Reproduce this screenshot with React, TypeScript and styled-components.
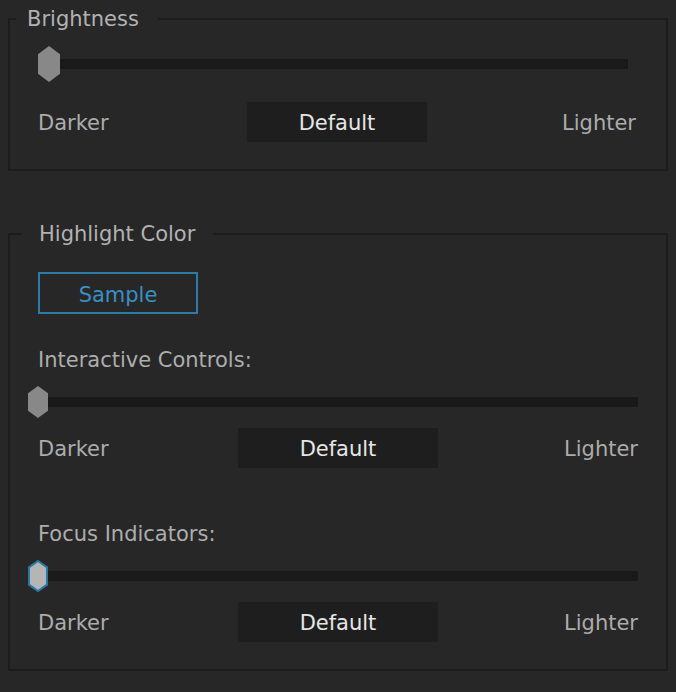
import React from "react";
import styled, { createGlobalStyle } from "styled-components";

const GlobalStyle = createGlobalStyle`
  html, body {
    margin: 0;
    padding: 0;
    background: #272727;
  }
  body {
    font-family: "DejaVu Sans", "Open Sans", sans-serif;
  }
`;

const Page = styled.div`
  width: 676px;
  height: 692px;
  box-sizing: border-box;
  padding-top: 5px;
  background: #272727;
  font-family: "DejaVu Sans", "Open Sans", sans-serif;
  font-size: 21px;
  line-height: 28px;
  color: #acacac;
  overflow: hidden;
`;

const Group = styled.fieldset<{ $gap?: number }>`
  margin: ${(p) => p.$gap ?? 0}px 8px 0 8px;
  padding: 0;
  min-width: 0;
  border: 2px solid #1c1c1c;
`;

const Legend = styled.legend<{ $ml: number; $pl: number; $pr: number }>`
  margin-left: ${(p) => p.$ml}px;
  padding: 0 ${(p) => p.$pr}px 0 ${(p) => p.$pl}px;
  font-size: 21px;
  line-height: 28px;
  color: #b2b2b2;
`;

const Body = styled.div<{ $pl: number; $pr: number }>`
  display: flex;
  flex-direction: column;
  padding: 0 ${(p) => p.$pr}px 27px ${(p) => p.$pl}px;
`;

const Label = styled.div<{ $mt: number }>`
  margin-top: ${(p) => p.$mt}px;
  height: 28px;
  line-height: 28px;
  color: #adadad;
  white-space: nowrap;
`;

const SampleButton = styled.button`
  margin-top: 24px;
  width: 160px;
  height: 42px;
  box-sizing: border-box;
  border: 2px solid #2b7aa7;
  background: transparent;
  color: #3a8fc3;
  font-family: inherit;
  font-size: 21px;
  line-height: 26px;
  padding: 3px 0 0 0;
  cursor: pointer;
`;

const SliderRow = styled.div<{ $mt: number; $h: number; $ml?: number; $mr?: number }>`
  display: flex;
  align-items: center;
  height: ${(p) => p.$h}px;
  margin-top: ${(p) => p.$mt}px;
  margin-left: ${(p) => p.$ml ?? 0}px;
  margin-right: ${(p) => p.$mr ?? 0}px;
`;

const Track = styled.div`
  flex: 1;
  height: 10px;
  background: #191919;
`;

const ThumbSvg = styled.svg`
  flex-shrink: 0;
  display: block;
`;

const ScaleRow = styled.div<{ $mt: number }>`
  display: grid;
  grid-template-columns: 1fr auto 1fr;
  align-items: center;
  margin-top: ${(p) => p.$mt}px;
`;

const ScaleText = styled.span<{ $right?: boolean }>`
  color: #acacac;
  justify-self: ${(p) => (p.$right ? "end" : "start")};
  white-space: nowrap;
  padding-top: 1px;
`;

const DefaultButton = styled.button<{ $w: number }>`
  width: ${(p) => p.$w}px;
  height: 40px;
  border: none;
  padding: 2px 0 0 0;
  background: #1e1e1e;
  color: #e6e6e6;
  font-family: inherit;
  font-size: 21px;
  line-height: 26px;
  cursor: pointer;
`;

type ThumbProps = { w: number; h: number; focused?: boolean };

const Thumb: React.FC<ThumbProps> = ({ w, h, focused }) => {
  const s = focused ? 1 : 0;
  const k = h * 0.23;
  const pts = [
    [w / 2, s],
    [w - s, k],
    [w - s, h - k],
    [w / 2, h - s],
    [s, h - k],
    [s, k],
  ]
    .map((p) => p.join(","))
    .join(" ");
  return (
    <ThumbSvg width={w} height={h} viewBox={`0 0 ${w} ${h}`}>
      <polygon
        points={pts}
        fill={focused ? "#b5b5b5" : "#888888"}
        stroke={focused ? "#2b78a7" : "none"}
        strokeWidth={focused ? 2 : 0}
      />
    </ThumbSvg>
  );
};

type SliderProps = {
  mt: number;
  h: number;
  tw: number;
  ml?: number;
  mr?: number;
  focused?: boolean;
};

const Slider: React.FC<SliderProps> = ({ mt, h, tw, ml, mr, focused }) => (
  <SliderRow $mt={mt} $h={h} $ml={ml} $mr={mr}>
    <Thumb w={tw} h={h} focused={focused} />
    <Track />
  </SliderRow>
);

const Scale: React.FC<{ mt: number; bw: number }> = ({ mt, bw }) => (
  <ScaleRow $mt={mt}>
    <ScaleText>Darker</ScaleText>
    <DefaultButton $w={bw}>Default</DefaultButton>
    <ScaleText $right>Lighter</ScaleText>
  </ScaleRow>
);

export default function App() {
  return (
    <>
      <GlobalStyle />
      <Page>
        <Group>
          <Legend $ml={6} $pl={11} $pr={19}>
            Brightness
          </Legend>
          <Body $pl={28} $pr={30}>
            <Slider mt={13} h={36} tw={22} mr={8} />
            <Scale mt={20} bw={180} />
          </Body>
        </Group>

        <Group $gap={49}>
          <Legend $ml={12} $pl={17} $pr={18}>
            Highlight Color
          </Legend>
          <Body $pl={28} $pr={28}>
            <SampleButton>Sample</SampleButton>
            <Label $mt={32}>Interactive Controls:</Label>
            <Slider mt={12} h={32} tw={20} ml={-10} />
            <Scale mt={10} bw={200} />
            <Label $mt={52}>Focus Indicators:</Label>
            <Slider mt={12} h={32} tw={20} ml={-10} focused />
            <Scale mt={10} bw={200} />
          </Body>
        </Group>
      </Page>
    </>
  );
}
